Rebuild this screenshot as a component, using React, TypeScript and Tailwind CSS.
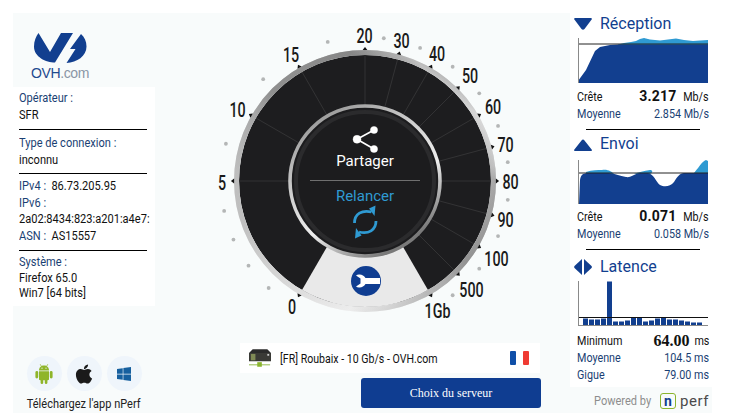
import React from 'react'
import { FaApple, FaWindows } from 'react-icons/fa'

const cx = 365
const cy = 181

const polar = (deg: number, r: number) => {
  const a = (deg * Math.PI) / 180
  return { x: cx + Math.sin(a) * r, y: cy - Math.cos(a) * r }
}

const tickAngles = [-150, -90, -60, -30, 0, 15, 30, 45, 60, 75, 90, 105, 120, 135, 150]
const lineAngles = [-90, -60, -30, 0, 15, 30, 45, 60, 75, 90, 105, 120, 135]
const dotAngles = [
  -138, -126, -114, -102, -75, -45, -15, 7.5, 22.5, 37.5, 52.5, 67.5, 82.5, 97.5, 112.5, 127.5,
  142.5
]
const labels = [
  { t: '0', x: 292, y: 306.5 },
  { t: '5', x: 222, y: 182.5 },
  { t: '10', x: 237.5, y: 109 },
  { t: '15', x: 291, y: 54.5 },
  { t: '20', x: 364.5, y: 35 },
  { t: '30', x: 401.5, y: 40 },
  { t: '40', x: 437, y: 53.5 },
  { t: '50', x: 470, y: 75.5 },
  { t: '60', x: 493, y: 106.5 },
  { t: '70', x: 505.5, y: 144 },
  { t: '80', x: 510.5, y: 181.5 },
  { t: '90', x: 505.5, y: 219.5 },
  { t: '100', x: 496.5, y: 258.5 },
  { t: '500', x: 471.5, y: 289.5 },
  { t: '1Gb', x: 437.5, y: 310 }
]

const Gauge = () => {
  const a = polar(-150, 126)
  const b = polar(150, 126)
  return (
    <svg viewBox="203 13 320 325" className="block w-[320px] h-[325px] shrink-0">
      <defs>
        <linearGradient id="rim" x1="0.1" y1="0.95" x2="0.9" y2="0.05">
          <stop offset="0" stopColor="#f6f6f6" />
          <stop offset="0.25" stopColor="#e2e2e2" />
          <stop offset="0.42" stopColor="#b8b8b8" />
          <stop offset="0.52" stopColor="#8a8a8a" />
          <stop offset="0.62" stopColor="#8c8c8c" />
          <stop offset="0.78" stopColor="#7e7e7e" />
          <stop offset="0.9" stopColor="#e4e4e4" />
          <stop offset="1" stopColor="#6e6e6e" />
        </linearGradient>
        <linearGradient id="rimBottom" x1="0" y1="0" x2="1" y2="1">
          <stop offset="0" stopColor="#9a9a9a" />
          <stop offset="0.35" stopColor="#8a8a8a" />
          <stop offset="0.55" stopColor="#bdbdbd" />
          <stop offset="0.72" stopColor="#f0f0f0" />
          <stop offset="0.88" stopColor="#8e8e8e" />
          <stop offset="1" stopColor="#c4c4c4" />
        </linearGradient>
        <linearGradient id="hub" x1="0" y1="0" x2="0.6" y2="1">
          <stop offset="0" stopColor="#858585" />
          <stop offset="0.4" stopColor="#c9c9c9" />
          <stop offset="0.7" stopColor="#eeeeee" />
          <stop offset="1" stopColor="#7a7a7a" />
        </linearGradient>
      </defs>

      {dotAngles.map((d) => {
        const p = polar(d, 144)
        return <circle key={d} cx={p.x} cy={p.y} r="1.9" fill="#b4b6b6" />
      })}

      <circle cx={cx} cy={cy} r="126" fill="#1d1d1f" />
      <path
        d={`M${a.x} ${a.y} L${cx} ${cy} L${b.x} ${b.y} A126 126 0 0 1 ${a.x} ${a.y} Z`}
        fill="#e9e9e9"
      />
      {lineAngles.map((d) => {
        const p = polar(d, 74)
        const q = polar(d, 126)
        return <line key={d} x1={p.x} y1={p.y} x2={q.x} y2={q.y} stroke="#38383a" strokeWidth="0.8" />
      })}
      <circle cx={cx} cy={cy} r="128.5" fill="none" stroke="url(#rim)" strokeWidth="5" />
      <circle cx={cx} cy={cy} r="128.5" fill="none" stroke="url(#rimBottom)" strokeWidth="5" opacity="0.45" />

      {tickAngles.map((d) => {
        const p = polar(d, 132.5)
        return (
          <polygon
            key={d}
            points="-2.4,1.6 2.4,1.6 0,-1.6"
            transform={`translate(${p.x} ${p.y}) rotate(${d})`}
            fill="#111111"
          />
        )
      })}

      {labels.map((l) => (
        <text
          key={l.t}
          transform={`translate(${l.x} ${l.y + 7.5}) scale(0.68 1)`}
          textAnchor="middle"
          fontFamily="Roboto, sans-serif"
          fontWeight="500"
          fontSize="21"
          fill="#1a1a1a"
        >
          {l.t}
        </text>
      ))}

      <circle cx={cx} cy={cy} r="75" fill="#1c1c1e" stroke="url(#hub)" strokeWidth="3.6" />
      <circle cx={cx} cy={cy} r="69" fill="none" stroke="#2b2b2d" strokeWidth="4" />

      <g fill="#ffffff" stroke="#ffffff">
        <line x1="374" y1="130" x2="357" y2="139.3" strokeWidth="1.6" />
        <line x1="374" y1="149" x2="357" y2="139.3" strokeWidth="1.6" />
        <circle cx="374" cy="130" r="3.6" strokeWidth="0.4" />
        <circle cx="357" cy="139.3" r="4" strokeWidth="0.4" />
        <circle cx="374" cy="149" r="3.6" strokeWidth="0.4" />
      </g>
      <text x="365" y="165.5" textAnchor="middle" fontFamily="Roboto, sans-serif" fontSize="15" fill="#ffffff">
        Partager
      </text>
      <line x1="310" y1="180.5" x2="420" y2="180.5" stroke="#6f6f6f" strokeWidth="1" />
      <text x="365" y="201" textAnchor="middle" fontFamily="Roboto, sans-serif" fontSize="15" fill="#2f9ad2">
        Relancer
      </text>

      <g fill="none" stroke="#2f9ad2" strokeWidth="2.8">
        <path d="M354.5 223 C354.5 214 362 209.5 371.5 212" />
        <path d="M376 221 C376 230 368.5 234.5 359 232" />
      </g>
      <polygon points="369,208.5 375.5,205.5 374.5,216" fill="#2f9ad2" />
      <polygon points="361.5,235.5 355,238.5 356,228" fill="#2f9ad2" />

      <circle cx="366" cy="281" r="15" fill="#0f3d91" />
      <path
        d="M380 278 H365.5 C364 275.5 361.5 274.3 359 274.6 C357.8 274.7 356.8 275 356 275.6 L360.5 278.5 V283.5 L356 286.4 C356.8 287 357.8 287.3 359 287.4 C361.5 287.7 364 286.5 365.5 284 H380 Z"
        fill="#ffffff"
      />
    </svg>
  )
}

const OvhLogo = () => (
  <div className="flex flex-col items-center h-[74px] pt-5 w-[94px]">
    <svg viewBox="33 33 56 31" className="block w-14 h-[31px] shrink-0">
      <path
        d="M39.5 33 L51 52 L62 33 H74 L56 62.5 C47 62.5 35 57 35 46.5 C35 41 37 36.5 39.5 33 Z"
        fill="#123f8f"
      />
      <path
        d="M82 34 L71 49 H76.5 L67.5 63 C78 62.5 87.5 56 87.5 46.5 C87.5 41.5 85.5 37 82 34 Z"
        fill="#123f8f"
      />
    </svg>
    <div className="font-['Liberation_Sans',sans-serif] text-[14px] leading-[15px] mt-[2px] tracking-[-0.4px]">
      <span className="text-[#1f4a8f]">OVH</span>
      <span className="text-[#8a96a6]">.com</span>
    </div>
  </div>
)

const Rule = ({ className }: { className: string }) => <div className={`h-px bg-black ${className}`} />

// the reference font is tall and narrow, squeeze Roboto to get there
const Narrow = ({ className = '', children }: { className?: string; children: React.ReactNode }) => (
  <div className={`origin-left scale-x-[.885] ${className}`}>{children}</div>
)

const InfoPanel = () => (
  <div className="bg-white w-[142px] h-[219px] pl-[6px] pt-[2px] text-[12.5px] leading-[17px] whitespace-nowrap text-[#111]">
    <Narrow className="text-[#1a3f73]">Opérateur :</Narrow>
    <Narrow>SFR</Narrow>
    <Rule className="w-[128px] mt-[6px] mb-[4px]" />
    <Narrow className="text-[#1a3f73]">Type de connexion :</Narrow>
    <Narrow>inconnu</Narrow>
    <Rule className="w-[128px] mt-[5px] mb-[4px]" />
    <div className="leading-[16.5px]">
      <Narrow>
        <span className="text-[#1a3f73] mr-[6px]">IPv4 :</span>86.73.205.95
      </Narrow>
      <Narrow className="text-[#1a3f73]">IPv6 :</Narrow>
      <Narrow>2a02:8434:823:a201:a4e7:</Narrow>
      <Narrow>
        <span className="text-[#1a3f73] mr-[6px]">ASN :</span>AS15557
      </Narrow>
    </div>
    <Rule className="w-[128px] mt-[6px] mb-[3px]" />
    <Narrow className="text-[#1a3f73] leading-[16px]">Système :</Narrow>
    <Narrow className="leading-[16px]">Firefox 65.0</Narrow>
    <Narrow className="leading-[14px]">Win7 [64 bits]</Narrow>
  </div>
)

const AppLinks = () => (
  <div className="mt-[50px] flex flex-col items-center w-[142px]">
    <div className="flex gap-[5px]">
      <div className="w-[35px] h-[35px] rounded-full bg-[#eff5fb] flex items-center justify-center">
        <svg viewBox="0 0 18 21" className="block w-[18px] h-[21px]">
          <g fill="#8fb52a">
            <path d="M4 7.5 C4 4.5 6 2.5 9 2.5 C12 2.5 14 4.5 14 7.5 Z" />
            <path d="M4 8.3 H14 V16 C14 16.8 13.5 17.2 12.8 17.2 H5.2 C4.5 17.2 4 16.8 4 16 Z" />
            <rect x="0.4" y="8" width="2.8" height="7.5" rx="1.4" />
            <rect x="14.8" y="8" width="2.8" height="7.5" rx="1.4" />
            <rect x="5.6" y="15" width="2.6" height="6" rx="1.3" />
            <rect x="9.8" y="15" width="2.6" height="6" rx="1.3" />
          </g>
          <g stroke="#8fb52a" strokeWidth="0.7">
            <line x1="6.4" y1="3.4" x2="5.2" y2="1.2" />
            <line x1="11.6" y1="3.4" x2="12.8" y2="1.2" />
          </g>
          <circle cx="7" cy="5.2" r="0.6" fill="#eff5fb" />
          <circle cx="11" cy="5.2" r="0.6" fill="#eff5fb" />
        </svg>
      </div>
      <div className="w-[35px] h-[35px] rounded-full bg-[#eff5fb] flex items-center justify-center">
        <FaApple className="w-[22px] h-[22px] text-[#1a1a1a]" />
      </div>
      <div className="w-[35px] h-[35px] rounded-full bg-[#eff5fb] flex items-center justify-center">
        <FaWindows className="w-[16px] h-[16px] text-[#17609f]" />
      </div>
    </div>
    <div className="mt-[4px] text-[12.5px] leading-[17px] text-[#222] whitespace-nowrap scale-x-[.88]">
      Téléchargez l'app nPerf
    </div>
  </div>
)

const StatRow = ({
  label,
  value,
  unit,
  strong,
  serif
}: {
  label: string
  value: string
  unit?: string
  strong?: boolean
  serif?: boolean
}) => (
  <div
    className={`flex items-center justify-between h-[17px] w-[132px] ml-[7px] text-[12.5px] leading-[17px] whitespace-nowrap ${
      strong ? 'text-[#111]' : 'text-[#1a3f73]'
    }`}
  >
    <span className="origin-left scale-x-[.86]">{label}</span>
    {strong ? (
      <span className="flex items-center">
        <span
          className={
            serif
              ? "font-['Liberation_Serif',serif] font-bold text-[16px] mr-[2px]"
              : 'font-bold text-[14px] tracking-[0.2px] mr-[3px]'
          }
        >
          {value}
        </span>
        <span className="origin-right scale-x-[.86]">{unit}</span>
      </span>
    ) : (
      <span className="origin-right scale-x-[.86]">
        {value} {unit}
      </span>
    )}
  </div>
)

const SectionTitle = ({ icon, title }: { icon: React.ReactNode; title: string }) => (
  <div className="flex items-center h-[22px] pl-[3px] gap-[7px]">
    <svg viewBox="0 0 20 16" className="block w-5 h-4 shrink-0">
      {icon}
    </svg>
    <span className="text-[16px] leading-[22px] text-[#123f8f]">{title}</span>
  </div>
)

const ChartFrame = ({ h, className, children }: { h: number; className: string; children: React.ReactNode }) => (
  <svg viewBox={`0 0 130 ${h}`} className={`block w-[130px] ml-[8px] ${className}`}>
    {children}
  </svg>
)

const latency = [7, 6, 6, 7, 44, 4, 4, 5, 8, 8, 4, 5, 7, 8, 6, 6, 5, 4, 3, 3]

const StatsPanel = () => (
  <div className="bg-white w-[142px] h-[374px] overflow-hidden">
    <SectionTitle
      title="Réception"
      icon={<path d="M1 3 C1 2 2 2 3 2 H17 C18 2 19 2 19 3 L11.5 13 C10.5 14 9.5 14 8.5 13 Z" fill="#123f8f" />}
    />
    <ChartFrame h={45} className="h-[45px] mt-[3px]">
      <path
        d="M40 6.5 L46 5 L53 4 L58 3 L62 1 L66 0 L72 1.5 L82 2.5 L90 1.5 L98 0.5 L106 2 L115 3 L122 2.5 L130 2 V7 H40 Z"
        fill="#2f9ad2"
      />
      <path d="M0 43 L8 32 L17 13 L22 9 L32 7 L40 6.5 L130 6.5 V45 H0 Z" fill="#123f8f" />
      <line x1="0" y1="6" x2="130" y2="6" stroke="#222" strokeWidth="1" />
      <line x1="0.5" y1="0" x2="0.5" y2="45" stroke="#8a8a8a" strokeWidth="1" />
    </ChartFrame>
    <div className="mt-[5px]">
      <StatRow label="Crête" value="3.217" unit="Mb/s" strong />
      <StatRow label="Moyenne" value="2.854" unit="Mb/s" />
    </div>
    <Rule className="w-[114px] ml-[16px] mt-[7px]" />

    <div className="mt-[3px]">
      <SectionTitle
        title="Envoi"
        icon={<path d="M1 14 C1 15 2 15 3 15 H17 C18 15 19 15 19 14 L11.5 4.5 C10.5 3 9.5 3 8.5 4.5 Z" fill="#123f8f" />}
      />
    </div>
    <ChartFrame h={44} className="h-[44px] mt-[5px]">
      <path
        d="M8 12 C14 10 20 10 24 10 C30 9 34 12 36 14 H8 Z M56 14 C60 12 66 11 72 10 C74 10 76 12 72 14 Z M115 14 C120 9 124 1 128 0 L130 1 V14 Z"
        fill="#2f9ad2"
      />
      <path
        d="M1 44 L2 20 C3 14 5 13 12 13 H30 C36 13 42 16 48 17 C53 18 58 13 62 13 H70 C76 14 78 22 82 25 C86 27 92 27 96 22 C99 17 102 13 106 13 H130 V44 Z"
        fill="#123f8f"
      />
      <line x1="0" y1="13" x2="130" y2="13" stroke="#222" strokeWidth="1" />
      <line x1="0.5" y1="0" x2="0.5" y2="44" stroke="#8a8a8a" strokeWidth="1" />
    </ChartFrame>
    <div className="mt-[4px]">
      <StatRow label="Crête" value="0.071" unit="Mb/s" strong />
      <StatRow label="Moyenne" value="0.058" unit="Mb/s" />
    </div>
    <Rule className="w-[114px] ml-[16px] mt-[7px]" />

    <div className="mt-[6px]">
      <SectionTitle
        title="Latence"
        icon={
          <g fill="#123f8f">
            <path d="M9 0 V16 L1.5 9 C1 8.5 1 7.5 1.5 7 Z" />
            <path d="M11 0 V16 L18.5 9 C19 8.5 19 7.5 18.5 7 Z" />
          </g>
        }
      />
    </div>
    <ChartFrame h={45} className="h-[45px] mt-[3px]">
      {latency.map((v, i) => (
        <rect key={i} x={5 + i * 6} y={44.5 - v} width="5" height={v} fill="#123f8f" />
      ))}
      <line x1="0" y1="36.5" x2="130" y2="36.5" stroke="#111" strokeWidth="1" />
      <line x1="0.5" y1="0" x2="0.5" y2="45" stroke="#8a8a8a" strokeWidth="1" />
      <line x1="0" y1="44.5" x2="130" y2="44.5" stroke="#8a8a8a" strokeWidth="1" />
    </ChartFrame>
    <div className="mt-[6px]">
      <StatRow label="Minimum" value="64.00" unit="ms" strong serif />
      <StatRow label="Moyenne" value="104.5" unit="ms" />
      <StatRow label="Gigue" value="79.00" unit="ms" />
    </div>
  </div>
)

const ServerRow = () => (
  <div className="bg-white w-[300px] h-[30px] ml-[85px] mt-[5px] flex items-center pl-[9px] pr-[11px] shrink-0">
    <svg viewBox="0 0 24 20" className="block w-[22px] h-[19px] shrink-0">
      <path d="M4 0 H20 L24 4 H0 Z" fill="#2b2b2b" />
      <rect x="0" y="4" width="24" height="9" fill="#3a3a36" />
      <rect x="2" y="5" width="5" height="7" fill="#7f8a55" />
      <rect x="20" y="5" width="2" height="2" fill="#cfcfcf" />
      <rect x="0" y="16" width="23" height="1.6" fill="#b5cf85" />
      <rect x="9" y="14" width="5" height="5" fill="#8bb52e" />
    </svg>
    <span className="ml-[9px] text-[13px] leading-[17px] text-[#111] whitespace-nowrap origin-left scale-x-[.815]">
      [FR] Roubaix - 10 Gb/s - OVH.com
    </span>
    <div className="ml-auto flex w-[19px] h-[14px] shrink-0">
      <div className="w-[6px] bg-[#0f4fa8] rounded-[1px]" />
      <div className="w-[7px]" />
      <div className="w-[6px] bg-[#ef3b33] rounded-[1px]" />
    </div>
  </div>
)

const App = () => (
  <div className="w-[752px] h-[416px] bg-white pt-[13px] pl-[13px] overflow-hidden font-['Roboto',sans-serif]">
    <div className="w-[699px] h-[400px] bg-[#f8fbfb] flex">
      <div className="w-[142px] shrink-0 flex flex-col items-start">
        <OvhLogo />
        <InfoPanel />
        <AppLinks />
      </div>
      <div className="w-[415px] shrink-0 flex flex-col">
        <div className="ml-[48px]">
          <Gauge />
        </div>
        <ServerRow />
        <button className="block w-[180px] h-[30px] ml-[206px] mt-[5px] bg-[#0f3d91] rounded-[3px] text-white font-['Liberation_Serif',serif] text-[12px] shrink-0">
          Choix du serveur
        </button>
      </div>
      <div className="w-[142px] shrink-0">
        <StatsPanel />
        <div className="flex items-center h-[26px] mt-[1px] pl-[24px] text-[12px] text-[#8d8d8d] whitespace-nowrap">
          <span className="w-[57px] origin-left scale-x-[.92]">Powered by</span>
          <span className="ml-[9px] flex items-center">
            <span className="w-[16px] h-[16px] border-[1.5px] border-[#8bb52e] rounded-[3px] flex items-center justify-center text-[14px] leading-none font-bold text-[#123f8f]">
              n
            </span>
            <span className="ml-[4px] text-[15px] leading-none tracking-[0.6px] text-[#4a4a4a]">perf</span>
          </span>
        </div>
      </div>
    </div>
  </div>
)

export default App
